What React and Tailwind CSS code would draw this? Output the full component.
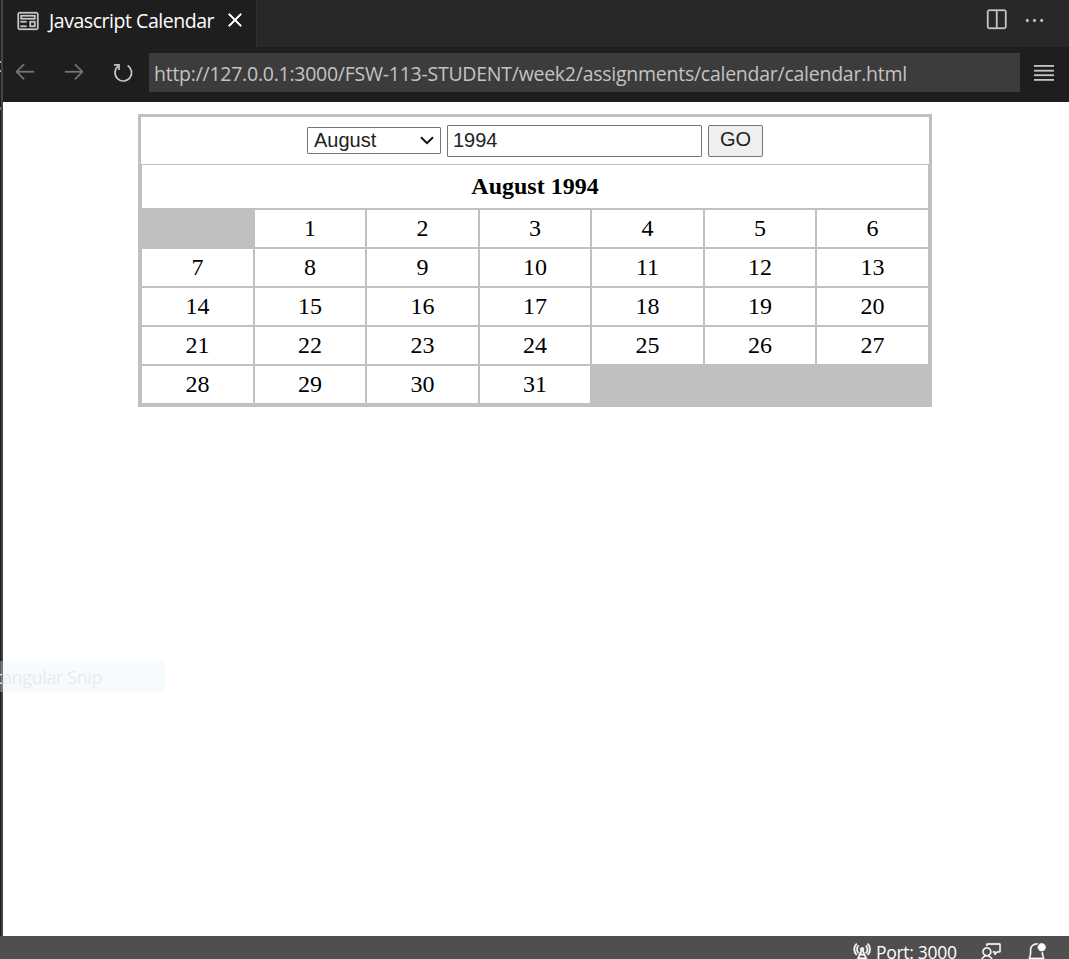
import React from "react";
import {
  VscPreview,
  VscClose,
  VscArrowLeft,
  VscArrowRight,
  VscSplitHorizontal,
  VscEllipsis,
  VscRadioTower,
  VscFeedback,
  VscBellDot,
} from "react-icons/vsc";

const days = Array.from({ length: 31 }, (_, i) => i + 1);

function ReloadIcon() {
  return (
    <svg width="22" height="22" viewBox="0 0 22 22" fill="none" stroke="#c5c5c5" strokeWidth="1.7">
      <path d="M15.6 4.6A8.3 8.3 0 1 1 6.2 5.2" />
      <path d="M2 3.9H7V9" />
    </svg>
  );
}

function MenuIcon() {
  return (
    <svg width="20" height="16" viewBox="0 0 20 16" fill="#c5c5c5">
      <rect y="0" width="20" height="1.8" />
      <rect y="4.8" width="20" height="1.8" />
      <rect y="9.3" width="20" height="1.8" />
      <rect y="14" width="20" height="1.8" />
    </svg>
  );
}

function TabBar() {
  return (
    <div className="flex h-[47px] bg-[#282828]">
      <div className="flex h-full w-[254px] shrink-0 border-r border-[#303031] bg-[#1e1e1e] pl-[13px]">
        <VscPreview className="mt-[9px] h-[24px] w-[24px] shrink-0 stroke-[0.2px] text-[#c5c5c5]" />
        <span className="ml-[9px] mt-[7px] w-[166px] whitespace-nowrap text-[19.5px] leading-[28px] tracking-[-0.46px] text-white">
          Javascript Calendar
        </span>
        <VscClose className="ml-[8px] mt-[8px] h-[24px] w-[24px] shrink-0 stroke-[0.5px] text-white" />
      </div>
      <div className="ml-auto flex pr-[23px] text-[#c5c5c5]">
        <VscSplitHorizontal className="mt-[8px] h-[24px] w-[24px] stroke-[0.2px]" />
        <VscEllipsis className="ml-[15px] mt-[9px] h-[23px] w-[23px] stroke-[0.2px]" />
      </div>
    </div>
  );
}

function AddressBar() {
  return (
    <div className="flex h-[55px] bg-[#1e1e1e]">
      <VscArrowLeft className="ml-[10px] mt-[12px] h-[24px] w-[24px] shrink-0 stroke-[0.2px] text-[#777777]" />
      <VscArrowRight className="ml-[25px] mt-[12px] h-[24px] w-[24px] shrink-0 stroke-[0.2px] text-[#777777]" />
      <div className="ml-[26px] mt-[14px] w-[37px] shrink-0">
        <ReloadIcon />
      </div>
      <div className="mt-[6px] h-[39px] w-[871px] shrink-0 whitespace-nowrap bg-[#3c3c3c] pl-[5px] pt-[7px] text-[19.5px] leading-[28px] tracking-[-0.255px] text-[#c3c3c3]">
        http://127.0.0.1:3000/FSW-113-STUDENT/week2/assignments/calendar/calendar.html
      </div>
      <div className="ml-[14px] mt-[18px]">
        <MenuIcon />
      </div>
    </div>
  );
}

function Calendar() {
  return (
    <div className="ml-[135px] mt-[12px] h-[293px] w-[794px] border-[3px] border-[#c0c0c0] bg-[#c0c0c0]">
      <form
        className="flex h-[47px] justify-center bg-white font-['Liberation_Sans',sans-serif] text-[20px] text-[#222222]"
        onSubmit={(e) => e.preventDefault()}
      >
        <div className="relative mt-[10px] h-[27px] w-[134px]">
          <select
            defaultValue="August"
            className="block h-full w-full appearance-none rounded-[1px] border border-[#767676] bg-white pb-[1px] pl-[6px] leading-[24px]"
          >
            <option>August</option>
          </select>
          <svg className="absolute right-[7px] top-[9px]" width="14" height="10" viewBox="0 0 14 10" fill="none" stroke="#111" strokeWidth="2">
            <path d="M1 1.2L7 7.2L13 1.2" />
          </svg>
        </div>
        <input
          defaultValue="1994"
          className="ml-[6px] mt-[8px] h-[32px] w-[255px] rounded-[1px] border border-[#767676] pb-[2px] pl-[5px]"
        />
        <button className="ml-[6px] mt-[8px] h-[32px] w-[55px] rounded-[2px] border border-[#767676] bg-[#efefef] pb-[4px] leading-[26px]">
          GO
        </button>
      </form>
      <div className="mx-px mt-px h-[43px] bg-white pt-[7px] text-center font-['Liberation_Serif',serif] text-[24px] font-bold leading-[28px] text-black">
        August 1994
      </div>
      <div className="mx-px mt-[2px] grid grid-cols-[111px_110px_111px_110px_111px_110px_111px] gap-[2px] font-['Liberation_Serif',serif] text-[24px] leading-[37px] text-black">
        <div className="h-[37px]" />
        {days.map((d) => (
          <div key={d} className="h-[37px] bg-white text-center">
            {d}
          </div>
        ))}
      </div>
    </div>
  );
}

function StatusBar() {
  return (
    <div className="flex h-[23px] overflow-hidden bg-[#4f4f4f] text-white">
      <VscRadioTower className="ml-[851px] mt-[6px] h-[21px] w-[21px] shrink-0 stroke-[0.4px]" />
      <span className="ml-[4px] mt-[3px] w-[82px] shrink-0 whitespace-nowrap text-[17.5px] leading-[26px] tracking-[-0.3px]">
        Port: 3000
      </span>
      <VscFeedback className="ml-[23px] mt-[6px] h-[21px] w-[21px] shrink-0 stroke-[0.2px]" />
      <VscBellDot className="ml-[24px] mt-[6px] h-[21px] w-[21px] shrink-0 stroke-[0.2px]" />
    </div>
  );
}

export default function App() {
  return (
    <div className="relative flex h-[959px] w-[1069px] flex-col overflow-hidden bg-white font-['Open_Sans','Noto_Sans',sans-serif]">
      <div className="flex h-[936px]">
        <div className="w-[3px] shrink-0 border-r-2 border-[#444444] bg-[#1e1e1e]" />
        <main className="w-[1066px]">
          <TabBar />
          <AddressBar />
          <Calendar />
        </main>
      </div>
      <StatusBar />
      <div className="absolute left-0 top-[661px] h-[31px] w-[165px] overflow-hidden bg-[#dff3fc]/30">
        <span className="-ml-[4px] block whitespace-nowrap text-[18px] leading-[33px] tracking-[-0.4px] text-[#e9ebec]">
          tangular Snip
        </span>
      </div>
      <div className="absolute left-0 top-[61px] flex w-px flex-col gap-[7px]">
        <div className="h-[2px] bg-[#d0b0a0]" />
        <div className="h-[2px] bg-[#b0b0b0]" />
      </div>
      <div className="absolute left-0 top-[107px] h-[3px] w-px bg-[#b06020]" />
    </div>
  );
}
